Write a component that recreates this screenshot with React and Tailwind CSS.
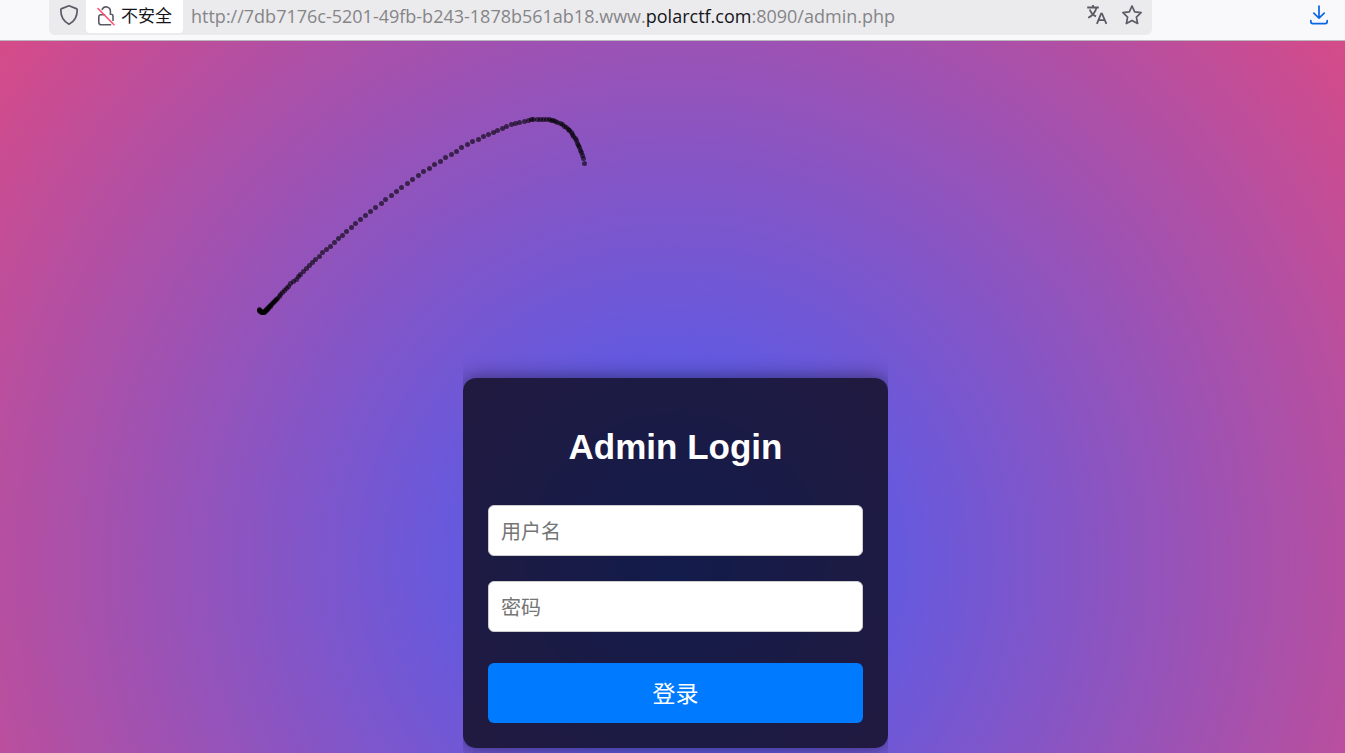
import { useState } from "react";

// mouse trail, oldest point last
const trail = [
  [584, 163], [583, 158], [582, 155], [581, 152], [580, 150], [579, 147], [578, 145], [577, 143],
  [576, 140], [575, 138], [573, 136], [572, 134], [571, 132], [569, 130], [568, 129],
  [566, 127], [564, 126], [562, 124], [560, 123], [557, 122], [555, 121], [553, 120],
  [551, 120], [549, 119], [546, 119], [543, 119], [540, 119], [537, 119], [533, 119],
  [531, 119], [528, 120], [524, 121], [519, 122], [515, 123], [511, 124], [506, 126], [502, 128], [497, 130],
  [493, 132], [488, 134], [483, 136], [478, 139], [472, 141], [467, 144], [461, 147], [456, 151],
  [451, 154], [445, 157], [440, 161], [434, 164], [429, 168], [423, 171], [418, 175], [412, 179],
  [407, 183], [401, 187], [396, 191], [391, 195], [385, 199], [381, 203], [375, 207], [370, 211],
  [365, 215], [360, 219], [355, 223], [351, 227], [346, 231], [342, 235], [338, 238], [334, 242],
  [330, 246], [326, 249], [322, 252], [319, 256], [315, 259], [312, 262], [309, 265], [306, 268],
  [303, 271], [300, 274], [298, 276], [296, 279], [293, 281], [290, 283], [288, 286], [286, 288],
  [284, 290], [282, 292], [280, 294], [279, 296], [277, 298], [276, 299], [275, 300], [274, 301],
  [273, 302], [272, 303], [271, 304], [270, 305], [270, 306], [269, 306], [268, 307], [268, 308],
  [267, 308], [267, 309], [266, 309], [266, 310], [265, 310], [265, 311], [264, 311], [264, 312],
  [263, 312], [263, 312], [262, 312], [262, 312], [261, 312], [261, 311], [260, 311], [260, 311],
  [259, 310], [259, 310], [259, 309],
];

const MouseTrail = () => (
  <svg className="absolute left-0 top-0 w-full h-full pointer-events-none" aria-hidden="true">
    {trail.map(([x, y], i) => (
      <circle key={i} cx={x + 0.5} cy={y - 40.5} r="2.5" fill="#000" fillOpacity="0.6" />
    ))}
  </svg>
);

const ShieldIcon = () => (
  <svg width="20" height="22" viewBox="0 0 20 22" fill="none" stroke="#5b5b66" strokeWidth="1.7" strokeLinejoin="round">
    <path d="M10 1.8 L17.3 4.6 Q18.2 5 18.2 6 C18.2 12 16.5 17 10 20.2 C3.5 17 1.8 12 1.8 6 Q1.8 5 2.7 4.6 Z" />
  </svg>
);

const InsecureIcon = () => (
  <svg width="20" height="22" viewBox="0 0 20 22" fill="none" strokeWidth="1.6" strokeLinecap="round">
    <path
      stroke="#5b5b66"
      d="M6.2 4.4 A4.3 4.3 0 0 1 14.4 6.2 V9.2 H15 A2 2 0 0 1 17 11.2 V15.5 M8.5 9.7 H5 A2.2 2.2 0 0 0 2.8 11.9 V17.6 A2.2 2.2 0 0 0 5 19.8 H14.6"
    />
    <path stroke="#ff4f6e" d="M2 3.5 L18 19.8" />
  </svg>
);

const TranslateIcon = () => (
  <svg width="22" height="22" viewBox="0 0 22 22" fill="none" stroke="#5b5b66" strokeWidth="1.8">
    <path d="M1.2 3.5 H12.8 M7 1 V3.5" />
    <path d="M10.4 3.8 C9.5 8 6.4 11.8 2.2 13.8 M3.8 5.4 C4.8 8.6 7 11 10 12.4" />
    <path d="M10.9 19.8 L15.1 9.6 H16 L20.4 19.8 M12.4 16.2 H18.8" />
  </svg>
);

const StarIcon = () => (
  <svg width="22" height="22" viewBox="0 0 22 22" fill="none" stroke="#5b5b66" strokeWidth="1.7" strokeLinejoin="round">
    <path d="M11 2 L13.7 7.9 L20.1 8.7 L15.4 13.1 L16.6 19.5 L11 16.4 L5.4 19.5 L6.6 13.1 L1.9 8.7 L8.3 7.9 Z" />
  </svg>
);

const DownloadIcon = () => (
  <svg width="20" height="22" viewBox="0 0 20 22" fill="none" stroke="#0b66e4" strokeWidth="1.7" strokeLinecap="round" strokeLinejoin="round">
    <path d="M10 2 V14 M4.8 9.2 L10 14.2 L15.2 9.2" />
    <path d="M1.8 16.5 V17.6 A2 2 0 0 0 3.8 19.6 H16.2 A2 2 0 0 0 18.2 17.6 V16.5" />
  </svg>
);

const Toolbar = () => (
  <header className="flex h-[41px] shrink-0 items-start border-b border-[#b9b9bd] bg-[#f9f9fb] pl-[49px] pr-4">
    <div className="flex h-[35px] flex-1 items-start rounded-b-md bg-[#ebebed] pl-2.5 pr-[9px]">
      <button type="button" aria-label="Tracking protection" className="flex h-[30px] w-[27px] items-center">
        <ShieldIcon />
      </button>
      <button type="button" className="flex h-[33px] items-center gap-[5px] rounded-b-sm bg-white pl-2.5 pr-[11px] pb-0.5 text-[17px] text-[#15141a]">
        <InsecureIcon />
        <span className="pt-0.5">不安全</span>
      </button>
      <div className="h-8 flex-1 overflow-hidden whitespace-nowrap pl-2 font-['Open_Sans','Noto_Sans',sans-serif] text-lg leading-8 text-[#858588]">
        http://7db7176c-5201-49fb-b243-1878b561ab18.www.<span className="text-[#15141a]">polarctf.com</span>:8090/admin.php
      </div>
      <div className="flex h-[30px] items-center gap-[13px]">
        <button type="button" aria-label="Translate">
          <TranslateIcon />
        </button>
        <button type="button" aria-label="Bookmark">
          <StarIcon />
        </button>
      </div>
    </div>
    <button type="button" aria-label="Downloads" className="ml-[157px] flex h-[30px] items-center">
      <DownloadIcon />
    </button>
  </header>
);

const LoginForm = () => {
  const [form, setForm] = useState({ username: "", password: "" });

  const handleChange = (e) => {
    setForm({ ...form, [e.target.name]: e.target.value });
  };

  const inputClass =
    "block h-[51px] w-full rounded-md border border-[#ccc] bg-white px-3 pt-[3px] text-xl text-black placeholder:text-[#757575]";

  return (
    <form
      onSubmit={(e) => e.preventDefault()}
      className="w-full rounded-[13px] bg-black/70 p-[25px] shadow-[0_0_20px_rgba(0,0,0,0.5)]"
    >
      <h2 className="mt-6 mb-[38px] text-center text-[35px] leading-10 font-bold text-white">Admin Login</h2>
      <input
        type="text"
        name="username"
        aria-label="用户名"
        placeholder="用户名"
        value={form.username}
        onChange={handleChange}
        className={inputClass}
      />
      <input
        type="password"
        name="password"
        aria-label="密码"
        placeholder="密码"
        value={form.password}
        onChange={handleChange}
        className={`mt-[25px] ${inputClass}`}
      />
      <button type="submit" className="mt-[31px] h-[60px] w-full rounded-md bg-[#007bff] pt-[3px] text-[23px] text-white">
        登录
      </button>
    </form>
  );
};

const App = () => {
  return (
    <div className="flex h-screen flex-col overflow-hidden font-['Liberation_Sans','Noto_Sans_CJK_SC',sans-serif]">
      <Toolbar />
      <main className="relative flex flex-1 justify-center overflow-hidden bg-[radial-gradient(circle_1070px_at_calc(50%+3px)_522px,#3f5efb,#fc466b)] pt-[337px] pl-1.5">
        <MouseTrail />
        <div className="w-full max-w-[425px] overflow-x-clip">
          <LoginForm />
        </div>
      </main>
    </div>
  );
};

export default App;
